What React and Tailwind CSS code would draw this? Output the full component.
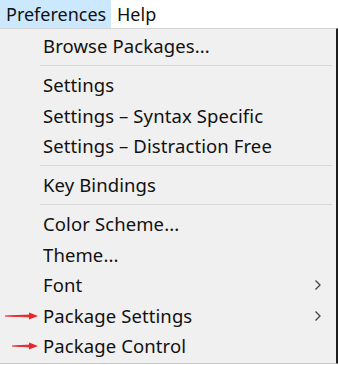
import React from 'react';

const font = { fontFamily: '"Noto Sans", "Open Sans", sans-serif' };

const Arrow = ({ startX }) => (
  <svg className="absolute top-1/2 -translate-y-1/2 left-0" width="42" height="10" viewBox="0 0 42 10">
    <path d={`M${startX} 5 L31 4.2 L31 5.8 Z`} fill="#e8262b" stroke="#e8262b" strokeWidth="1.2" />
    <path d="M29 1.5 L38 5 L29 8.5 Z" fill="#e8262b" />
  </svg>
);

const Chevron = () => (
  <svg className="absolute right-[14px] top-1/2 -translate-y-1/2" width="8" height="12" viewBox="0 0 8 12">
    <path d="M1.5 1.5 L6 6 L1.5 10.5" fill="none" stroke="#444" strokeWidth="1.3" />
  </svg>
);

const Item = ({ label, sub, arrow }) => (
  <div className="relative h-[30.5px] flex items-center pl-[43px] text-[18.5px] text-[#111]">
    {arrow && <Arrow startX={arrow} />}
    <span className="leading-none tracking-[0.1px]">{label}</span>
    {sub && <Chevron />}
  </div>
);

const Sep = () => (
  <div className="h-[8.5px] flex items-center pl-[40px] pr-[4px]">
    <div className="h-px w-full bg-[#d9d9d9]" />
  </div>
);

export default function App() {
  return (
    <div className="w-[338px] h-[365px] bg-white overflow-hidden" style={font}>
      <div className="flex h-[28px] text-[18px] text-[#111]">
        <div className="bg-[#cce8ff] px-[6px] flex items-center w-[111px]">Preferences</div>
        <div className="px-[6px] flex items-center">Help</div>
      </div>
      <div className="h-[336px] bg-[#f0f0f0] border-t border-[#d4d4d4] border-b border-b-[#c8c8c8] border-r-2 border-r-[#1e1e1e] pt-[2px]">
        <Item label="Browse Packages..." />
        <Sep />
        <Item label="Settings" />
        <Item label="Settings – Syntax Specific" />
        <Item label="Settings – Distraction Free" />
        <Sep />
        <Item label="Key Bindings" />
        <Sep />
        <Item label="Color Scheme..." />
        <Item label="Theme..." />
        <Item label="Font" sub />
        <Item label="Package Settings" sub arrow={5} />
        <Item label="Package Control" arrow={12} />
      </div>
    </div>
  );
}
